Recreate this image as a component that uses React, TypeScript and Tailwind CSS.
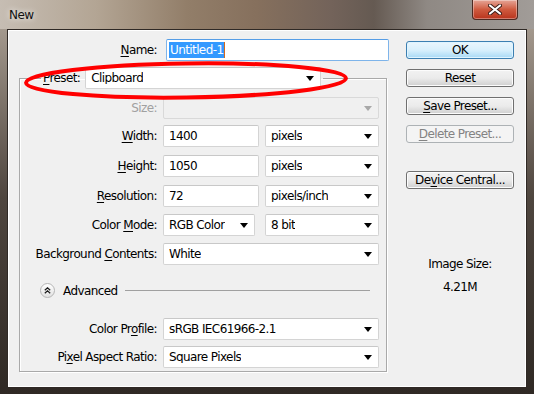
import type { ReactNode } from 'react';

// accelerator-key underline
function U({ children }: { children: ReactNode }) {
  return <span className="underline underline-offset-2">{children}</span>;
}

function Arrow({ disabled }: { disabled?: boolean }) {
  return (
    <svg width="8" height="5" viewBox="0 0 8 5" className="shrink-0">
      <path d="M0 0h8L4 5z" fill={disabled ? '#a8a8a8' : '#000'} />
    </svg>
  );
}

function Select({ value, w, disabled }: { value?: string; w: string; disabled?: boolean }) {
  return (
    <div
      className={`${w} h-[22px] shrink-0 flex items-center justify-between pl-[5px] pr-[6px] border rounded-[2px] ${
        disabled ? 'bg-[#f0f0f0] border-[#d9d9d9]' : 'bg-white border-[#d4d4d4] border-t-[#c8c8c8]'
      }`}
    >
      <span className="truncate">{value}</span>
      <Arrow disabled={disabled} />
    </div>
  );
}

function Input({ value, w }: { value: string; w: string }) {
  return (
    <div className={`${w} h-[22px] shrink-0 flex items-center pl-[5px] bg-white border border-[#d4d4d4] border-t-[#c8c8c8] rounded-[2px]`}>
      {value}
    </div>
  );
}

function Row({ label, mt, children, dim }: { label: ReactNode; mt: string; children: ReactNode; dim?: boolean }) {
  return (
    <div className={`flex items-center h-[22px] ${mt}`}>
      <div className={`w-[137px] shrink-0 text-right ${dim ? 'text-[#a0a0a0]' : ''}`}>{label}</div>
      <div className="ml-[6px] flex items-center gap-[6px]">{children}</div>
    </div>
  );
}

function Btn({ children, mt, primary, disabled }: { children: ReactNode; mt: string; primary?: boolean; disabled?: boolean }) {
  return (
    <div
      className={`${mt} h-[18px] w-[108px] flex items-center justify-center rounded-[3px] border ${
        primary
          ? 'border-[#3c7fb1] bg-gradient-to-b from-[#eaf6fd] via-[#d9f0fc] to-[#a7d9f5] shadow-[inset_0_0_0_1px_#dff4ff]'
          : disabled
            ? 'border-[#adb2b5] bg-[#f4f4f4] text-[#838383]'
            : 'border-[#707070] bg-gradient-to-b from-[#f2f2f2] via-[#ebebeb] to-[#cfcfcf] shadow-[inset_0_0_0_1px_#fcfcfc]'
      }`}
    >
      {children}
    </div>
  );
}

export default function App() {
  return (
    <div className="relative w-[534px] h-[394px] flex flex-col overflow-hidden text-[12px] leading-none text-black font-['DejaVu_Sans','Liberation_Sans',sans-serif] tracking-[-0.6px] bg-gradient-to-b from-[#b3a89c] via-[#4f463f] to-[#2f2924]">
      {/* title bar */}
      <div className="h-[29px] shrink-0 flex items-start bg-[linear-gradient(90deg,#c6bdb3_0%,#b3a594_18%,#927e69_35%,#86705d_48%,#73635a_62%,#655a52_70%,#8f8984_80%,#a19c98_100%)]">
        <span className="ml-[9px] mt-[9px] text-[12px] text-[#111] [text-shadow:0_0_6px_#fff]">New</span>
        <div className="ml-auto mr-[16px] w-[46px] h-[20px] flex items-center justify-center rounded-b-[4px] border border-t-0 border-[#4c2a22] bg-gradient-to-b from-[#e5a597] via-[#cf5a3f] to-[#b8321b] shadow-[inset_0_0_0_1px_rgba(255,255,255,0.35)]">
          <svg width="14" height="11" viewBox="0 0 14 11">
            <path d="M2 1.5l10 8M12 1.5l-10 8" stroke="#3b1d18" strokeWidth="4" strokeLinecap="round" />
            <path d="M2 1.5l10 8M12 1.5l-10 8" stroke="#fff" strokeWidth="2.2" strokeLinecap="round" />
          </svg>
        </div>
      </div>

      {/* client area */}
      <div className="mx-[7px] mb-[6px] flex-1 flex border border-[#2f2925] bg-[#f0f0f0] shadow-[inset_0_0_0_1px_#ffffff]">
        <div className="w-[381px] shrink-0 pl-[11px]">
          {/* name */}
          <div className="mt-[9px] flex items-center h-[22px]">
            <div className="w-[138px] shrink-0 text-right">
              <U>N</U>ame:
            </div>
            <div className="ml-[9px] w-[223px] h-[22px] shrink-0 flex items-center pl-[2px] bg-white border border-[#7eb4ea] border-t-[#569de5] rounded-[2px]">
              <span className="bg-[#3399ff] text-white px-[1px] py-[2px] border-r border-[#d2691e]">Untitled-1</span>
            </div>
          </div>

          <fieldset className="mt-[6px] w-[368px] pb-[3px] border border-[#a9a9a9] shadow-[inset_1px_1px_0_#fff,1px_1px_0_#fff]">
            <legend className="ml-[21px] px-[2px] flex items-center">
              <span>
                <U>P</U>reset:
              </span>
              <div className="ml-[5px]">
                <Select value="Clipboard" w="w-[236px]" />
              </div>
            </legend>

            <Row label="Size:" mt="mt-[8px]" dim>
              <Select w="w-[216px]" disabled />
            </Row>
            <Row label={<><U>W</U>idth:</>} mt="mt-[6px]">
              <Input value="1400" w="w-[96px]" />
              <Select value="pixels" w="w-[114px]" />
            </Row>
            <Row label={<><U>H</U>eight:</>} mt="mt-[8px]">
              <Input value="1050" w="w-[96px]" />
              <Select value="pixels" w="w-[114px]" />
            </Row>
            <Row label={<><U>R</U>esolution:</>} mt="mt-[8px]">
              <Input value="72" w="w-[96px]" />
              <Select value="pixels/inch" w="w-[114px]" />
            </Row>
            <Row label={<>Color <U>M</U>ode:</>} mt="mt-[7px]">
              <Select value="RGB Color" w="w-[92px]" />
              <div className="ml-[4px]">
                <Select value="8 bit" w="w-[114px]" />
              </div>
            </Row>
            <Row label={<>Background <U>C</U>ontents:</>} mt="mt-[7px]">
              <Select value="White" w="w-[216px]" />
            </Row>

            {/* advanced */}
            <div className="mt-[18px] h-[15px] flex items-center">
              <div className="ml-[20px] w-[15px] h-[15px] shrink-0 rounded-full border border-[#b5b5b5] bg-gradient-to-b from-white to-[#e2e2e2] flex items-center justify-center">
                <svg width="7" height="7" viewBox="0 0 7 7">
                  <path d="M0.8 3.3L3.5 0.8 6.2 3.3M0.8 6.3L3.5 3.8 6.2 6.3" fill="none" stroke="#1a1a1a" strokeWidth="1.2" />
                </svg>
              </div>
              <span className="ml-[8px]">Advanced</span>
              <div className="ml-[8px] mr-[16px] flex-1 h-px bg-[#a0a0a0]" />
            </div>

            <Row label={<>Color Pr<U>o</U>file:</>} mt="mt-[20px]">
              <Select value="sRGB IEC61966-2.1" w="w-[216px]" />
            </Row>
            <Row label={<>Pi<U>x</U>el Aspect Ratio:</>} mt="mt-[6px]">
              <Select value="Square Pixels" w="w-[216px]" />
            </Row>
          </fieldset>
        </div>

        {/* buttons */}
        <div className="ml-[17px] w-[108px] shrink-0 flex flex-col">
          <Btn mt="mt-[11px]" primary>OK</Btn>
          <Btn mt="mt-[10px]">Reset</Btn>
          <Btn mt="mt-[10px]">
            <span>
              <U>S</U>ave Preset...
            </span>
          </Btn>
          <Btn mt="mt-[10px]" disabled>
            <span>
              <U>D</U>elete Preset...
            </span>
          </Btn>
          <Btn mt="mt-[28px]">
            <span>
              De<U>v</U>ice Central...
            </span>
          </Btn>
          <div className="mt-[69px] text-center">Image Size:</div>
          <div className="mt-[11px] text-center">4.21M</div>
        </div>
      </div>

      {/* red annotation */}
      <svg className="absolute left-0 top-0 pointer-events-none" width="534" height="394" viewBox="0 0 534 394">
        <ellipse cx="186" cy="80.5" rx="160" ry="17" fill="none" stroke="#ff0000" strokeWidth="4" transform="rotate(-0.8 186 80.5)" />
      </svg>
    </div>
  );
}
